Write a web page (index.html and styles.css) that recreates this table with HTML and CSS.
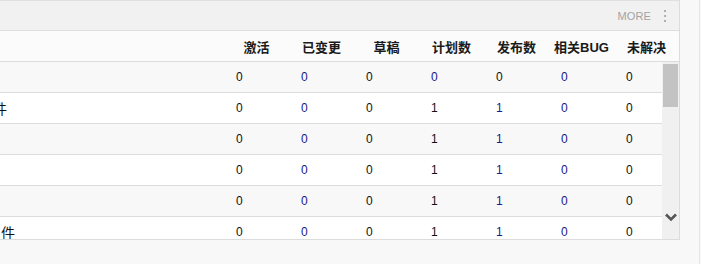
FILE: index.html
```html
<!DOCTYPE html>
<html lang="zh-CN">
<head>
<meta charset="utf-8">
<title>统计</title>
<link rel="stylesheet" href="styles.css">
</head>
<body>
<div class="page">
  <div class="panel">
    <div class="toolbar">
      <span class="more">MORE</span>
      <span class="dots"><i></i><i></i><i></i></span>
    </div>
    <div class="thead">
      <div class="th name"></div>
      <div class="th">激活</div>
      <div class="th">已变更</div>
      <div class="th">草稿</div>
      <div class="th">计划数</div>
      <div class="th">发布数</div>
      <div class="th">相关BUG</div>
      <div class="th">未解决</div>
    </div>
    <div class="tbody">
      <div class="rows">
        <div class="row odd">
          <div class="td name"></div>
          <div class="td">0</div><div class="td link">0</div><div class="td">0</div><div class="td link">0</div><div class="td">0</div><div class="td link">0</div><div class="td">0</div>
        </div>
        <div class="row">
          <div class="td name"><span class="cut">件</span></div>
          <div class="td">0</div><div class="td link">0</div><div class="td">0</div><div class="td">1</div><div class="td link">1</div><div class="td link">0</div><div class="td">0</div>
        </div>
        <div class="row odd">
          <div class="td name"></div>
          <div class="td">0</div><div class="td link">0</div><div class="td">0</div><div class="td">1</div><div class="td link">1</div><div class="td link">0</div><div class="td">0</div>
        </div>
        <div class="row">
          <div class="td name"></div>
          <div class="td">0</div><div class="td link">0</div><div class="td">0</div><div class="td">1</div><div class="td link">1</div><div class="td link">0</div><div class="td">0</div>
        </div>
        <div class="row odd">
          <div class="td name"></div>
          <div class="td">0</div><div class="td link">0</div><div class="td">0</div><div class="td">1</div><div class="td link">1</div><div class="td link">0</div><div class="td">0</div>
        </div>
        <div class="row">
          <div class="td name"><span class="full">件</span></div>
          <div class="td">0</div><div class="td link">0</div><div class="td">0</div><div class="td">1</div><div class="td link">1</div><div class="td link">0</div><div class="td">0</div>
        </div>
      </div>
      <div class="scrollbar">
        <div class="thumb"></div>
        <svg class="arrow" width="12" height="9" viewBox="0 0 12 9"><path d="M1 1.5 L6 6.5 L11 1.5" fill="none" stroke="#555" stroke-width="2.6"/></svg>
      </div>
    </div>
  </div>
</div>
</body>
</html>
```

FILE: styles.css
```css
* { box-sizing: border-box; }
html, body { margin: 0; padding: 0; }
body {
  background: #f8f8f8;
  font-family: "Liberation Sans", Arial, "Noto Sans CJK SC", sans-serif;
  color: #333;
  width: 701px;
  height: 264px;
  overflow: hidden;
}
.page {
  width: 700px;
  height: 264px;
  border-right: 1px solid #e6e6e6;
}
.panel {
  width: 680px;
  border-right: 1px solid #dcdcdc;
  border-bottom: 1px solid #dcdcdc;
  background: #fff;
}
.toolbar {
  height: 31px;
  border-top: 1px solid #e0e0e0;
  border-bottom: 1px solid #dedede;
  background: #f1f1f1;
  display: flex;
  align-items: center;
  justify-content: flex-end;
  padding-right: 13px;
}
.more {
  font-size: 11px;
  color: #a3a3a3;
  letter-spacing: 0.1px;
}
.dots {
  display: flex;
  flex-direction: column;
  gap: 3px;
  margin-left: 13px;
  margin-top: 1px;
}
.dots i {
  display: block;
  width: 2px;
  height: 2px;
  background: #b0b0b0;
}
.thead {
  display: grid;
  grid-template-columns: 224px repeat(7, 65px);
  height: 31px;
  background: #fbfbfb;
  border-bottom: 1px solid #dcdcdc;
}
.th {
  display: flex;
  align-items: center;
  justify-content: center;
  font-family: "Liberation Sans", Arial, "Noto Sans CJK SC", sans-serif;
  font-weight: bold;
  font-size: 13px;
  color: #1a1a1a;
  padding-top: 1px;
}
.tbody {
  display: flex;
  height: 177px;
  overflow: hidden;
}
.rows {
  width: 662px;
  display: flex;
  flex-direction: column;
}
.row {
  display: grid;
  grid-template-columns: 224px repeat(6, 65px) 48px;
  height: 31px;
  flex: none;
  background: #fff;
  border-bottom: 1px solid #dcdcdc;
}
.row.odd { background: #f8f8f8; }
.td {
  display: flex;
  align-items: center;
  padding-left: 12px;
  font-size: 12px;
  color: #111;
}
.td.link { color: #16208a; }
.td.name {
  padding-left: 0;
  overflow: hidden;
  font-family: "Noto Sans CJK SC", sans-serif;
  font-size: 14px;
  color: #111;
}
.cut {
  margin-left: -7px;
}
.full {
  margin-left: 1px;
}
.scrollbar {
  width: 17px;
  background: #f0f0f0;
  display: flex;
  flex-direction: column;
  align-items: center;
}
.thumb {
  width: 15px;
  height: 43px;
  margin-top: 2px;
  background: #c3c3c3;
}
.arrow {
  margin-top: auto;
  margin-bottom: 17px;
}
```
